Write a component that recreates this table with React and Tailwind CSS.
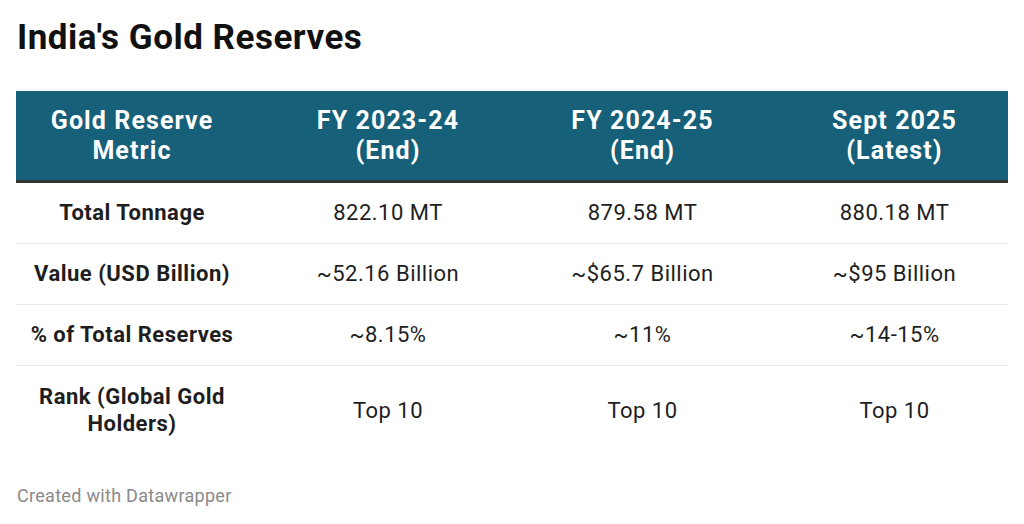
const columns = [
  ["Gold Reserve", "Metric"],
  ["FY 2023-24", "(End)"],
  ["FY 2024-25", "(End)"],
  ["Sept 2025", "(Latest)"]
];

const rows = [
  { metric: ["Total Tonnage"], values: ["822.10 MT", "879.58 MT", "880.18 MT"] },
  { metric: ["Value (USD Billion)"], values: ["~52.16 Billion", "~$65.7 Billion", "~$95 Billion"] },
  { metric: ["% of Total Reserves"], values: ["~8.15%", "~11%", "~14-15%"] },
  { metric: ["Rank (Global Gold", "Holders)"], values: ["Top 10", "Top 10", "Top 10"] }
];

// column grid tuned so every column's text centre lines up with the chart
const grid = "grid grid-cols-[232px_280px_229px_251px]";

export default function App() {
  return (
    <div className="min-h-[524px] w-[1024px] bg-white px-4 font-['Roboto','Liberation_Sans',sans-serif]">
      <h1 className="pl-px pt-[17px] text-[35px] font-bold leading-[42px] tracking-[0.5px] text-[#111]">
        India's Gold Reserves
      </h1>

      <div className="mt-[32px]">
        <div
          className={`${grid} h-[89px] items-center bg-[#17607a] text-[25px] font-bold leading-[30px] tracking-[1.1px] text-white`}
        >
          {columns.map((col, i) => (
            <div key={col[0]} className={`text-center ${i === 3 ? "pl-6" : ""}`}>
              {col.map((line) => (
                <div key={line}>{line}</div>
              ))}
            </div>
          ))}
        </div>
        <div className="h-[3px] bg-[#333]" />

        {rows.map((row, r) => {
          const last = r === rows.length - 1;
          return (
            <div
              key={row.metric[0]}
              className={`${grid} items-center text-[22px] tracking-[0.5px] text-[#1e1e1e] ${
                last ? "pb-[16px] pt-[17px] leading-[27px]" : "border-b border-[#e9e9e9] py-[17px] leading-[26px]"
              }`}
            >
              <div className="text-center font-bold">
                {row.metric.map((line) => (
                  <div key={line}>{line}</div>
                ))}
              </div>
              {row.values.map((v, i) => (
                <div key={i} className={`text-center ${i === 2 ? "pl-6" : ""}`}>
                  {v}
                </div>
              ))}
            </div>
          );
        })}
      </div>

      <p className="mt-[32px] pl-px text-[18px] leading-[22px] tracking-[0.3px] text-[#8a8a8a]">
        Created with Datawrapper
      </p>
    </div>
  );
}
